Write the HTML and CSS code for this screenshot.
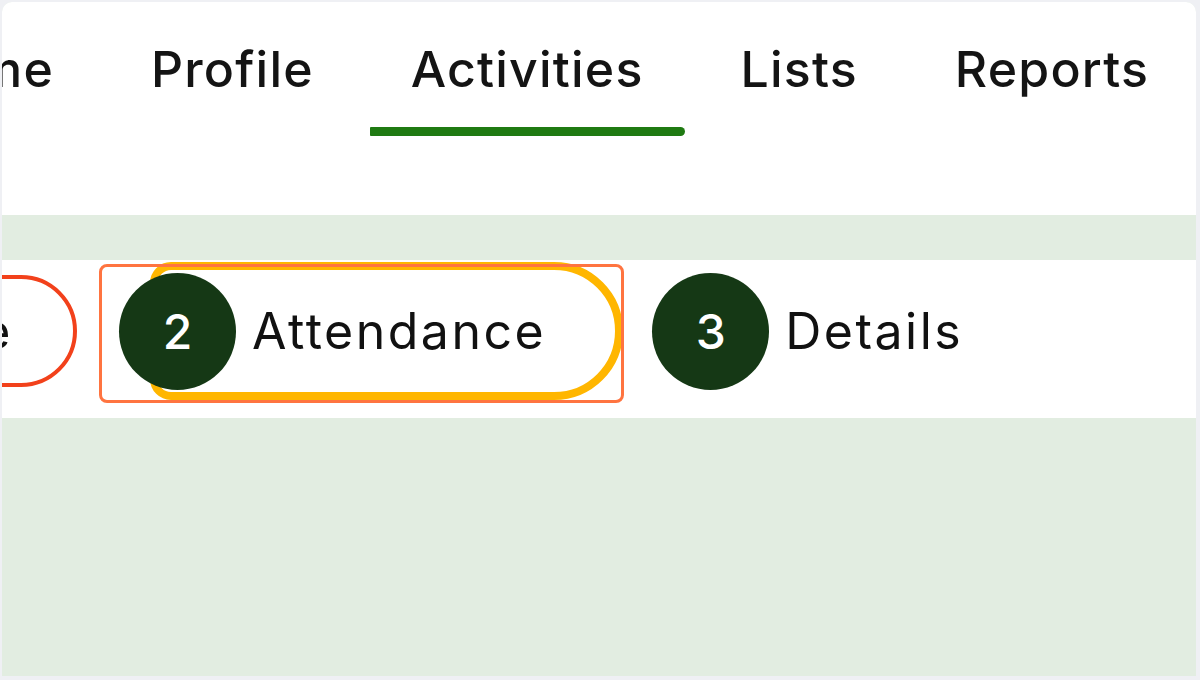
FILE: index.html
```html
<!DOCTYPE html>
<html lang="en">
<head>
<meta charset="utf-8">
<title>Activities</title>
<link rel="stylesheet" href="styles.css">
</head>
<body>
<div class="app">
  <header class="header">
    <nav class="tabs">
      <div class="clip clip-tabs"><a class="tab">Home</a></div>
      <a class="tab">Profile</a>
      <a class="tab active">Activities</a>
      <a class="tab">Lists</a>
      <a class="tab">Reports</a>
    </nav>
  </header>
  <main class="main">
    <div class="stepper">
      <div class="clip clip-steps">
        <div class="step error"><span class="num">1</span><span class="label">Schedule</span></div>
      </div>
      <div class="step focused">
        <span class="num">2</span><span class="label">Attendance</span>
        <span class="annot"></span>
      </div>
      <div class="step"><span class="num">3</span><span class="label">Details</span></div>
    </div>
  </main>
</div>
</body>
</html>
```

FILE: styles.css
```css
* { box-sizing: border-box; }
html, body { margin: 0; padding: 0; }
body {
  background: #eff0f4;
  font-family: Inter, "Noto Sans", sans-serif;
  color: #141414;
  overflow: hidden;
}
.app {
  margin: 2px 4px 4px 2px;
  height: 674px;
  border-radius: 10px 10px 0 0;
  overflow: hidden;
  background: #e2ede1;
  display: flex;
  flex-direction: column;
}
.header {
  background: #ffffff;
  height: 213px;
  padding-top: 37px;
  flex-shrink: 0;
}
.tabs {
  display: flex;
  gap: 15px;
}
.clip {
  display: flex;
  justify-content: flex-end;
  flex-shrink: 0;
}
.clip-tabs { width: 93px; }
.tab {
  flex-shrink: 0;
  display: flex;
  flex-direction: column;
  align-items: center;
  padding: 0 41px;
  font-size: 50px;
  font-weight: 500;
  line-height: 60px;
  letter-spacing: 1.2px;
  color: #141414;
}
.tab::after {
  content: "";
  display: block;
  align-self: stretch;
  height: 9px;
  margin: 28px -41px 0;
  border-radius: 1px 5px 5px 1px;
  background: transparent;
}
.tab.active::after { background: #1f7a12; }

.main {
  flex: 1;
  padding-top: 45px;
}
.stepper {
  background: #ffffff;
  height: 158px;
  padding-top: 15px;
  display: flex;
  gap: 42px;
}
.clip-steps { width: 75px; align-items: flex-start; }
.step {
  position: relative;
  flex-shrink: 0;
  display: flex;
  align-items: center;
  height: 112px;
}
.step.error {
  border: 4px solid #f2411b;
  border-radius: 56px;
  padding-right: 60px;
}
.num {
  position: relative;
  z-index: 2;
  width: 117px;
  height: 117px;
  border-radius: 50%;
  background: #153815;
  color: #ffffff;
  display: flex;
  align-items: center;
  justify-content: center;
  font-size: 48px;
  font-weight: 500;
  flex-shrink: 0;
}
.label {
  margin-left: 16px;
  font-size: 50px;
  font-weight: 400;
  letter-spacing: 2.5px;
  color: #111111;
  white-space: nowrap;
}
.step.focused .label {
  align-self: stretch;
  display: flex;
  align-items: center;
  margin-left: -73px;
  padding: 0 64px 0 89px;
  border-radius: 8px 56px 56px 8px;
  outline: 8px solid #ffb600;
  outline-offset: 5px;
  background: #ffffff;
}
.annot {
  position: absolute;
  top: -11px;
  bottom: -16px;
  left: -20px;
  right: -14px;
  border: 3px solid #ff7440;
  border-radius: 8px;
  z-index: 3;
  pointer-events: none;
}
```
